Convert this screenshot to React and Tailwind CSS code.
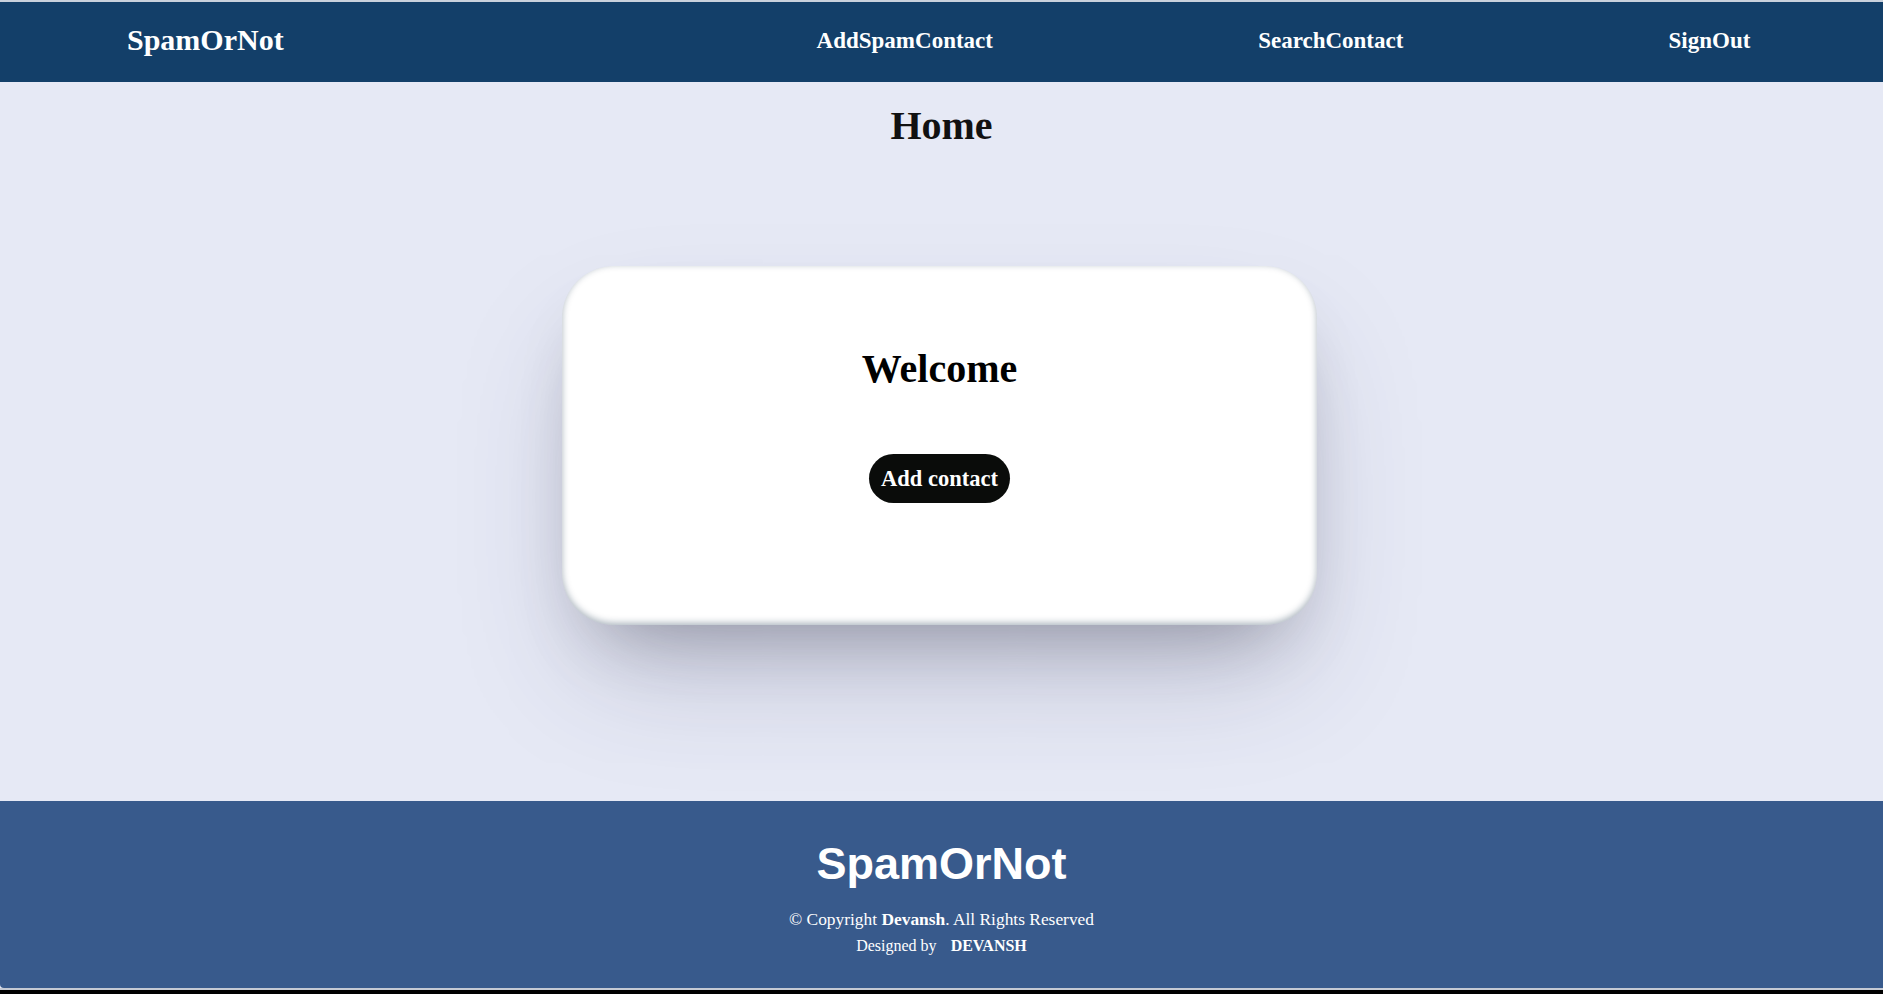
import React from 'react';

const serif = { fontFamily: '"Liberation Serif", "Times New Roman", serif' };

const Navbar = () => {
  return (
    <nav className="flex items-center h-[80px] bg-[#133f69] text-white">
      <div className="w-[684px] pl-[127px] pb-[4px]">
        <h1 className="text-[30px] font-bold leading-none">SpamOrNot</h1>
      </div>
      <ul className="flex-1 flex justify-around items-center text-[23px] font-bold pb-[2px]">
        <li>AddSpamContact</li>
        <li>SearchContact</li>
        <li>SignOut</li>
      </ul>
    </nav>
  );
};

const Footer = () => {
  return (
    <footer className="h-[187px] bg-[#385a8c] text-white flex flex-col items-center rounded-bl-[4px]">
      <h2
        className="mt-[37px] text-[45px] font-bold leading-[52px]"
        style={{ fontFamily: '"Liberation Sans", Arial, sans-serif' }}
      >
        SpamOrNot
      </h2>
      <p className="mt-[18px] text-[17.4px] leading-[22px]">
        © Copyright <b>Devansh</b>. All Rights Reserved
      </p>
      <p className="mt-[6px] text-[16px] leading-[20px]">
        Designed by <b className="ml-[10px]">DEVANSH</b>
      </p>
    </footer>
  );
};

const App = () => {
  return (
    <div className="min-h-[994px] flex flex-col bg-[#e6e9f5]" style={serif}>
      <div className="h-[2px] bg-[#c9d1dc]" />
      <Navbar />

      <main className="flex-1 flex flex-col items-center">
        {/* Page title */}
        <h1 className="mt-[21px] text-[40px] font-bold leading-[46px] text-[#111]">Home</h1>

        {/* Welcome card */}
        <div className="mt-[117px] mr-[4px] w-[755px] h-[359px] bg-white rounded-[52px] flex flex-col items-center shadow-[0_62px_125px_-25px_rgba(50,50,93,0.25),0_37px_75px_-37px_rgba(0,0,0,0.3),inset_0_-2px_7px_0_rgba(10,37,64,0.35)]">
          <h2 className="mt-[80px] text-[40px] font-bold leading-[46px] text-black">Welcome</h2>
          <button className="mt-[62px] px-[12px] py-[11px] rounded-full bg-[#0a0c0a] text-white text-[22.5px] font-bold leading-[27px]">
            Add contact
          </button>
        </div>
        <div className="h-[150px]" />
      </main>

      <Footer />
      <div className="h-[2px] bg-[#c4c9d3]" />
      <div className="h-[4px] bg-black" />
    </div>
  );
};

export default App;
